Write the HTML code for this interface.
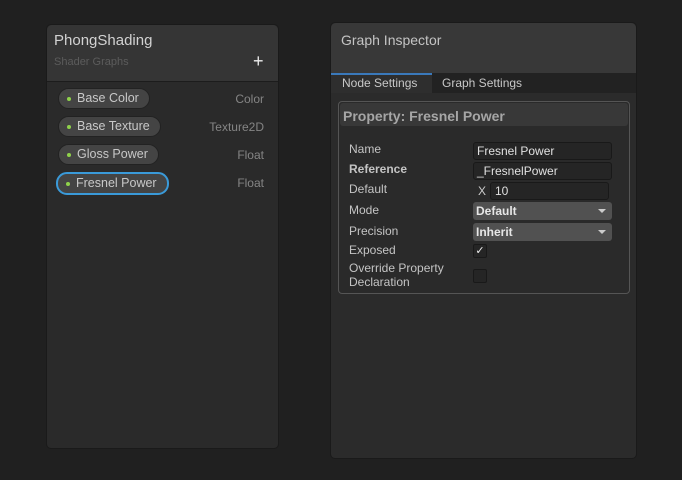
<!DOCTYPE html>
<html><head><style>
*{box-sizing:border-box;margin:0;padding:0}
body{width:682px;height:480px;background:#202020;font-family:"Liberation Sans",sans-serif;position:relative;overflow:hidden;font-size:12px;color:#c4c4c4}
.abs{position:absolute}
#left{left:46px;top:24px;width:233px;height:425px;background:#2a2a2a;border:1px solid #1a1a1a;border-radius:5px}
#lh{left:0;top:0;width:231px;height:57px;background:#353535;border-bottom:1px solid #1c1c1c;border-radius:5px 5px 0 0}
.pill{position:absolute;left:11px;height:21px;border-radius:11px;background:#444;border:1px solid #222;color:#c8c8c8;font-size:12.5px;line-height:19px;padding-left:18px;padding-right:10px}
.pill:before{content:"";position:absolute;left:8px;top:8px;width:4px;height:4px;border-radius:2px;background:#8fd24b}
.ty{position:absolute;right:14px;color:#858585;font-size:12px}
#right{left:330px;top:22px;width:307px;height:437px;background:#2b2b2b;border:1px solid #1a1a1a;border-radius:5px}
.lab{position:absolute;left:10px;font-size:12px;color:#c4c4c4}
.fld{position:absolute;left:134px;width:139px;height:18px;background:#252525;border:1px solid #191919;border-radius:3px;color:#e0e0e0;font-size:12px;line-height:16px;padding-left:3px}
.dd{position:absolute;left:134px;width:139px;height:18px;background:#515151;border-radius:3px;color:#e6e6e6;font-weight:bold;font-size:12px;line-height:18px;padding-left:3px}
.dd:after{content:"";position:absolute;right:6px;top:7px;border-left:4px solid transparent;border-right:4px solid transparent;border-top:4px solid #ccc}
.cb{position:absolute;left:134px;width:14px;height:14px;background:#252525;border:1px solid #191919;border-radius:2px}
</style></head><body>
<div id="left" class="abs">
 <div id="lh" class="abs">
  <div class="abs" style="left:7px;top:7px;font-size:15px;color:#d2d2d2">PhongShading</div>
  <div class="abs" style="left:7px;top:31px;font-size:11px;color:#5c5c5c">Shader Graphs</div>
  <div class="abs" style="left:206px;top:27px;font-size:18px;color:#eee;line-height:18px">+</div>
 </div>
 <div class="pill" style="top:63px">Base Color</div><div class="ty" style="top:67px">Color</div>
 <div class="pill" style="top:91px">Base Texture</div><div class="ty" style="top:95px">Texture2D</div>
 <div class="pill" style="top:119px">Gloss Power</div><div class="ty" style="top:123px">Float</div>
 <div class="pill" style="top:147px;left:9px;border:2px solid #3a9ad9;height:23px">Fresnel Power</div><div class="ty" style="top:151px">Float</div>
</div>
<div id="right" class="abs">
 <div class="abs" style="left:0;top:0;width:305px;height:50px;background:#383838;border-radius:5px 5px 0 0"></div>
 <div class="abs" style="left:10px;top:9px;font-size:14px;color:#c4c4c4">Graph Inspector</div>
 <div class="abs" style="left:0;top:50px;width:305px;height:20px;background:#222"></div>
 <div class="abs" style="left:0;top:50px;width:101px;height:20px;background:#2e2e2e;border-top:2px solid #3a79bb"></div>
 <div class="abs" style="left:11px;top:53px;color:#c8c8c8">Node Settings</div>
 <div class="abs" style="left:111px;top:53px;color:#c8c8c8">Graph Settings</div>
 <div class="abs" style="left:7px;top:78px;width:292px;height:193px;border:1px solid #555;border-radius:4px;background:#2a2a2a">
  <div class="abs" style="left:1px;top:1px;width:288px;height:23px;background:#383838;border-radius:3px"></div>
  <div class="abs" style="left:4px;top:6px;font-size:14px;font-weight:bold;color:#a6a6a6">Property: Fresnel Power</div>
  <div class="lab" style="top:40px">Name</div><div class="fld" style="top:40px">Fresnel Power</div>
  <div class="lab" style="top:60px;font-weight:bold">Reference</div><div class="fld" style="top:60px">_FresnelPower</div>
  <div class="lab" style="top:80px">Default</div>
  <div class="abs" style="left:139px;top:82px;color:#ccc">X</div>
  <div class="fld" style="top:80px;left:151px;width:119px;padding-left:4px">10</div>
  <div class="lab" style="top:101px">Mode</div><div class="dd" style="top:100px">Default</div>
  <div class="lab" style="top:122px">Precision</div><div class="dd" style="top:121px">Inherit</div>
  <div class="lab" style="top:141px">Exposed</div><div class="cb" style="top:142px;color:#eee;font-size:11px;line-height:12px;text-align:center">✓</div>
  <div class="lab" style="top:159px;line-height:14px">Override Property<br>Declaration</div><div class="cb" style="top:167px"></div>
 </div>
</div>
</body></html>
